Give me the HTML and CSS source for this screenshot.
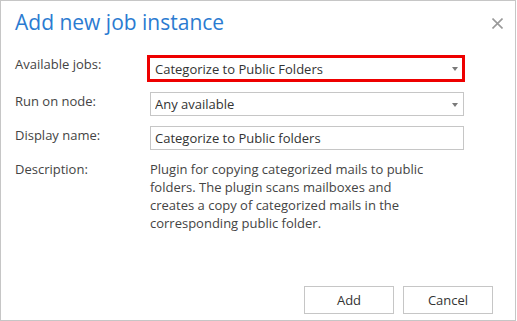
FILE: index.html
```html
<!DOCTYPE html>
<html lang="en">
  <head>
    <meta charset="UTF-8" />
    <meta name="viewport" content="width=device-width, initial-scale=1.0" />
    <title>Add new job instance</title>
    <link rel="stylesheet" href="styles.css">
  </head>
  <body>
    <div class="dialog">
      <div class="dialog-header">
        <h2>Add new job instance</h2>
        <button class="close-btn" type="button" aria-label="Close">
          <svg width="11" height="11" viewBox="0 0 11 11">
            <path d="M0.5 0.5 L10.5 10.5 M10.5 0.5 L0.5 10.5" stroke="#9a9a9a" stroke-width="1.6" fill="none" />
          </svg>
        </button>
      </div>

      <form class="job-form">
        <label for="job">Available jobs:</label>
        <div class="select highlight">
          <select id="job">
            <option>Categorize to Public Folders</option>
          </select>
        </div>

        <label for="node">Run on node:</label>
        <div class="select">
          <select id="node">
            <option>Any available</option>
          </select>
        </div>

        <label for="display-name">Display name:</label>
        <input type="text" id="display-name" value="Categorize to Public folders" />

        <label>Description:</label>
        <p class="description">
          Plugin for copying categorized mails to public folders. The plugin
          scans mailboxes and creates a copy of categorized mails in the
          corresponding public folder.
        </p>
      </form>

      <div class="dialog-footer">
        <button type="button">Add</button>
        <button type="button">Cancel</button>
      </div>
    </div>
  </body>
</html>
```

FILE: styles.css
```css
body {
  margin: 0;
  font-family: "Segoe UI", "Open Sans", sans-serif;
  font-size: 13px;
  color: #444;
  background-color: white;
}

.dialog {
  width: 516px;
  height: 321px;
  box-sizing: border-box;
  border: 1px solid #c6c6c6;
  display: flex;
  flex-direction: column;
}

.dialog-header {
  display: flex;
  justify-content: space-between;
  align-items: center;
  padding: 8px 12px 0 14px;
}

.dialog-header h2 {
  margin: 0;
  font-size: 21px;
  line-height: 26px;
  font-weight: normal;
  color: #2b7bd1;
}

.close-btn {
  border: none;
  background: none;
  padding: 0;
  margin-top: 2px;
  width: 11px;
  height: 11px;
  display: flex;
  cursor: pointer;
}

.job-form {
  display: grid;
  grid-template-columns: 135px 314px;
  row-gap: 10px;
  align-items: start;
  margin-top: 20px;
  padding-left: 14px;
}

.job-form label {
  line-height: 18px;
  color: #444;
}

.select {
  position: relative;
  height: 24px;
}

.select select,
.job-form input {
  appearance: none;
  width: 100%;
  height: 24px;
  box-sizing: border-box;
  border: 1px solid #c6c6c6;
  border-radius: 0;
  padding: 0 20px 0 4px;
  font-family: inherit;
  font-size: 13px;
  color: #333;
  background-color: white;
  outline: none;
}

.job-form input {
  padding-right: 4px;
}

/* small grey triangle of the dropdown */
.select::after {
  content: "";
  position: absolute;
  right: 6px;
  top: 11px;
  border-left: 3.5px solid transparent;
  border-right: 3.5px solid transparent;
  border-top: 4px solid #7a7a7a;
}

.select.highlight {
  height: 27px;
  margin-left: -3px;
  width: 318px;
}

.select.highlight select {
  height: 27px;
  border: 3px solid #ee0000;
  padding-left: 5px;
}

.select.highlight::after {
  right: 7px;
  top: 12px;
}

.description {
  margin: 0;
  width: 282px;
  line-height: 18px;
  color: #444;
}

.dialog-footer {
  margin-top: auto;
  display: flex;
  justify-content: flex-end;
  gap: 9px;
  padding: 0 22px 6px 0;
}

.dialog-footer button {
  width: 90px;
  height: 28px;
  border: 1px solid #c6c6c6;
  background-color: white;
  font-family: inherit;
  font-size: 13px;
  color: #333;
  cursor: pointer;
}

.dialog-footer button:hover {
  background-color: #f3f3f3;
}
```
